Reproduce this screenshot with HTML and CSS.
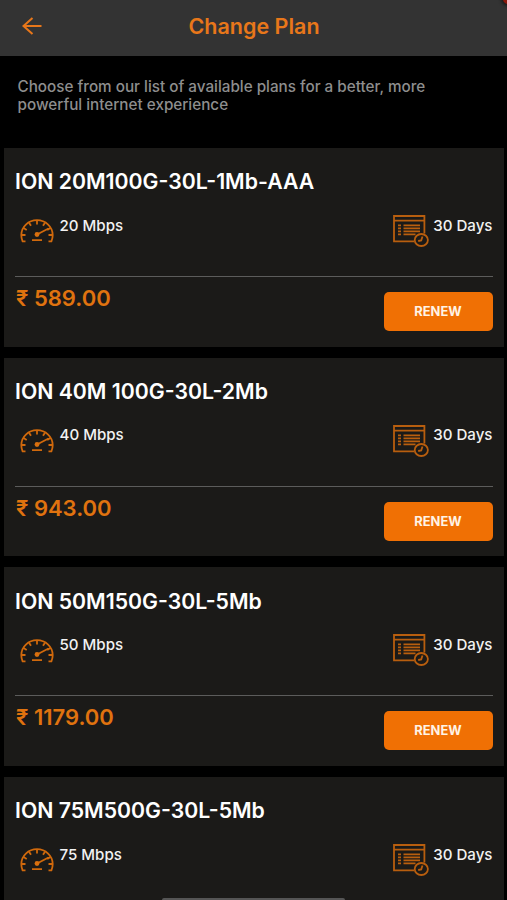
FILE: index.html
```
<!DOCTYPE html>
<html lang="en">
<head>
  <meta charset="UTF-8">
  <title>Change Plan</title>
  <meta name="viewport" content="width=device-width, initial-scale=1.0">
  <link rel="stylesheet" href="styles.css">
</head>
<body>

  <svg class="sprite" width="0" height="0">
    <symbol id="gauge" viewBox="0 0 34 24">
      <path d="M5.5 22.3H2.6A15.5 15.5 0 0 1 1.3 16a15.7 14.8 0 0 1 31.4 0 15.5 15.5 0 0 1-1.3 6.3h-2.9"/>
      <path d="M1.5 16h4M32.5 16h-4M3.5 9l3.2 2M30.5 9l-3.2 2M9 3.7l2 3.1M25 3.7l-2 3.1M17 1.3v4.2M12 21.2h10M17 15.5l11.5-6"/>
      <circle class="dot" cx="17" cy="15.5" r="2.4"/>
    </symbol>
    <symbol id="calendar" viewBox="0 0 36 32">
      <path d="M21 26.3H1V1h30.4v17.5M1 5.6h30.4"/>
      <path class="rows" d="M5 10.3h3M5 13.3h3M5 16.3h3M5 19.3h3M10.5 10.3h16.5M10.5 13.3h16.5M10.5 16.3h16.5M10.5 19.3h12"/>
      <ellipse cx="28.3" cy="25" rx="6.6" ry="6"/>
      <path d="M29.5 21.5l-1.3 3.9-3 .6"/>
    </symbol>
  </svg>

  <header class="header">
    <svg class="back" viewBox="0 0 20 18"><path d="M19.5 9H1.5M10.5 1L1.5 9l9 8"/></svg>
    <h1>Change Plan</h1>
    <span class="corner"></span>
  </header>

  <p class="intro">Choose from our list of available plans for a better, more powerful internet experience</p>

  <main id="plans"></main>

  <div class="home-bar"></div>

  <script>
    const plans = [
      { name: "ION 20M100G-30L-1Mb-AAA", speed: "20 Mbps", days: "30 Days", price: "589.00" },
      { name: "ION 40M 100G-30L-2Mb", speed: "40 Mbps", days: "30 Days", price: "943.00" },
      { name: "ION 50M150G-30L-5Mb", speed: "50 Mbps", days: "30 Days", price: "1179.00" },
      { name: "ION 75M500G-30L-5Mb", speed: "75 Mbps", days: "30 Days" }
    ];

    function buyRow(plan) {
      if (!plan.price) return "";
      return `
        <div class="buy">
          <span class="price">₹ ${plan.price}</span>
          <button>RENEW</button>
        </div>`;
    }

    document.getElementById("plans").innerHTML = plans.map(plan => `
      <section class="plan">
        <h2>${plan.name}</h2>
        <div class="details">
          <svg class="gauge"><use href="#gauge"/></svg>
          <span>${plan.speed}</span>
          <svg class="calendar"><use href="#calendar"/></svg>
          <span>${plan.days}</span>
        </div>
        ${buyRow(plan)}
      </section>`).join("");
  </script>
</body>
</html>
```
FILE: styles.css
```
* {
  box-sizing: border-box;
}

body {
  display: flex;
  flex-direction: column;
  margin: 0;
  height: 100vh;
  overflow: hidden;
  background-color: #000;
  color: #f2f2f2;
  font-family: Inter, sans-serif;
}

.sprite {
  position: absolute;
}

svg {
  fill: none;
  stroke: #d0690c;
  stroke-width: 1.8;
}

.header {
  position: relative;
  display: flex;
  flex: none;
  align-items: center;
  height: 56px;
  padding: 0 22px;
  background-color: #333;
  overflow: hidden;
}

.back {
  width: 20px;
  height: 18px;
  margin-top: -4px;
  stroke: #e8771a;
  stroke-width: 2;
}

h1 {
  flex: 1;
  margin: -5px 19px 0 0;
  color: #e8771a;
  font-size: 21.5px;
  font-weight: 600;
  text-align: center;
}

.corner {
  position: absolute;
  top: -6px;
  right: -6px;
  width: 10px;
  height: 10px;
  border-radius: 50%;
  background-color: #8a1a0c;
  box-shadow: 0 0 3px 2px #1c1c1c;
}

.intro {
  flex: none;
  height: 92px;
  margin: 0;
  padding: 22px 60px 0 17.5px;
  color: #8e8e8e;
  font-size: 15.25px;
  font-weight: 500;
  line-height: 18px;
}

#plans {
  flex: 1;
  min-height: 0;
  overflow: hidden;
}

.plan {
  height: 198.7px;
  margin: 0 3.5px 11px 4px;
  padding: 19.3px 11px 0;
  background-color: #1b1a18;
}

h2 {
  margin: 0;
  font-size: 21.25px;
  font-weight: 600;
  line-height: 28px;
  color: #fff;
}

.details {
  display: flex;
  height: 81.7px;
  padding-top: 20.4px;
  border-bottom: 1px solid #5c5c5b;
  font-size: 15.1px;
  font-weight: 500;
  line-height: 20px;
}

.gauge {
  width: 34px;
  height: 24px;
  margin: 3.6px 5.5px 0 5px;
}

.gauge + span {
  flex: 1;
}

.calendar {
  width: 36px;
  height: 32px;
  margin: -.6px 4.5px 0 0;
  stroke: #b85e0e;
}

.dot {
  fill: #d9700f;
  stroke: none;
}

.rows {
  stroke-width: 1.7;
}

.buy {
  display: flex;
  justify-content: space-between;
}

.price {
  margin: 7px 0 0 1px;
  color: #e0730f;
  font-size: 22px;
  font-weight: 600;
  line-height: 28px;
}

button {
  width: 109px;
  height: 39px;
  margin-top: 15px;
  border: none;
  border-radius: 5px;
  background-color: #f07004;
  color: #fff3e6;
  font-family: inherit;
  font-size: 12.9px;
  font-weight: 700;
}

.home-bar {
  position: fixed;
  bottom: 0;
  left: 162px;
  width: 183px;
  height: 2px;
  border-radius: 2px 2px 0 0;
  background-color: #555;
}
```
